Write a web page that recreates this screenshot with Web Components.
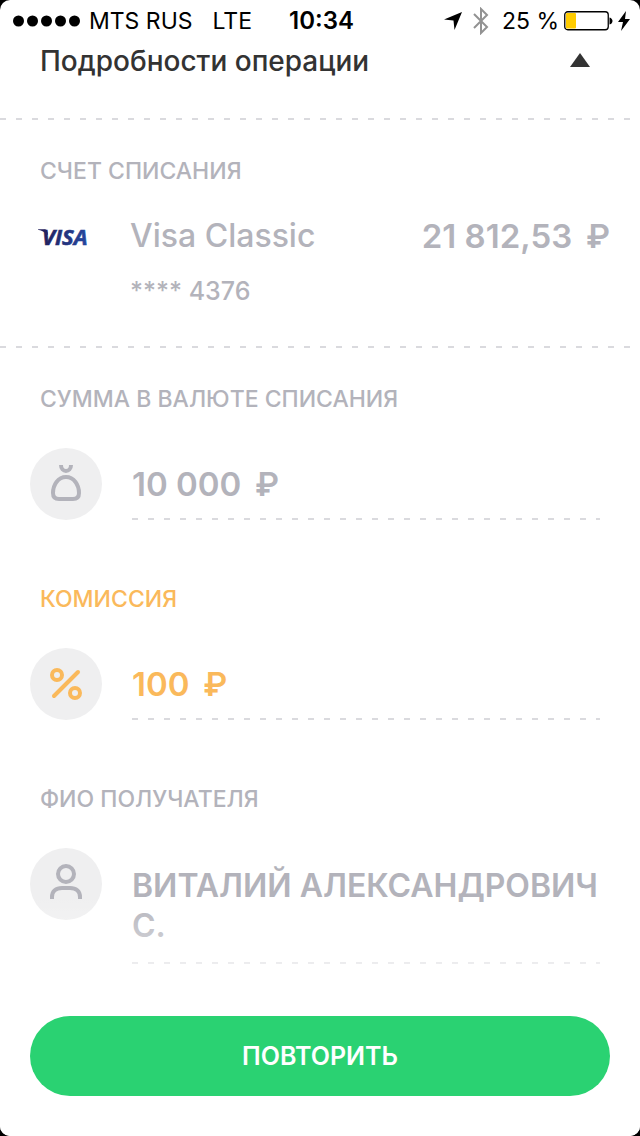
<!DOCTYPE html>
<html lang="ru">
<head>
<meta charset="utf-8">
<meta name="viewport" content="width=device-width, initial-scale=1">
<title>Подробности операции</title>
<style>
html { background: #000; }
body { margin: 0; font-family: Inter, "Liberation Sans", sans-serif; }
</style>
</head>
<body>
<operation-screen>
  <status-bar slot="status"></status-bar>
  <details-header slot="header">Подробности операции</details-header>
  <account-section amount="21 812,53&nbsp;&thinsp;₽" mask="**** 4376">
    <span slot="label">СЧЕТ СПИСАНИЯ</span>Visa Classic
  </account-section>
  <detail-field icon="bag" label="СУММА В ВАЛЮТЕ СПИСАНИЯ">10 000&nbsp;&thinsp;₽</detail-field>
  <detail-field icon="percent" label="КОМИССИЯ" accent>100&nbsp;&thinsp;₽</detail-field>
  <detail-field icon="person" label="ФИО ПОЛУЧАТЕЛЯ" multiline>ВИТАЛИЙ АЛЕКСАНДРОВИЧ С.</detail-field>
  <action-bar slot="footer">ПОВТОРИТЬ</action-bar>
</operation-screen>

<script>
const define = (name, html, setup) => {
  const template = document.createElement('template');
  template.innerHTML = html;
  customElements.define(name, class extends HTMLElement {
    constructor() {
      super();
      this.attachShadow({ mode: 'open' }).append(template.content.cloneNode(true));
    }
    connectedCallback() { if (setup) setup(this, this.shadowRoot); }
  });
};

const dashes = 'repeating-linear-gradient(90deg, #dadade 0 6px, transparent 6px 16px)';

define('operation-screen', `
<style>
:host {
  display: flex; flex-direction: column; min-height: 100vh; box-sizing: border-box;
  background: #fff; border-radius: 10px; overflow: hidden;
  --muted: #b3b3bb; --accent: #fab95b;
}
main { flex: 1; }
</style>
<slot name="status"></slot>
<slot name="header"></slot>
<main><slot></slot></main>
<slot name="footer"></slot>`);

define('status-bar', `
<style>
:host { display: grid; grid-template-columns: 1fr auto 1fr; align-items: center; box-sizing: border-box; height: 40px; padding: 2px 10px 0 13px; font-size: 23px; line-height: 28px; color: #000; white-space: nowrap; }
div { display: flex; align-items: center; }
.dots { margin-right: 8px; }
.net { margin-left: 20px; }
time { font-size: 24px; font-weight: 600; }
.right { justify-content: flex-end; }
.bt { margin: 0 13px 0 11px; }
.battery { margin: 0 5px 0 5px; }
svg { display: block; flex: none; }
</style>
<div>
  <svg class="dots" width="68" height="12"><g><circle cx="5.5" cy="6" r="5.5"/><circle cx="19.5" cy="6" r="5.5"/><circle cx="33.5" cy="6" r="5.5"/><circle cx="47.5" cy="6" r="5.5"/><circle cx="61.5" cy="6" r="5.5"/></g></svg>
  <span>MTS RUS</span><span class="net">LTE</span>
</div>
<time>10:34</time>
<div class="right">
  <svg width="18" height="18" viewBox="0 0 18 18"><path d="M18 0 10.5 18 9.500 8.500 0 7.500Z"/></svg>
  <svg class="bt" width="16" height="28" viewBox="0 0 16 28" fill="none" stroke="#929292" stroke-width="2"><path d="M1 7 14 20 8 26V2L14 8 1 21"/></svg>
  <span>25 %</span>
  <svg class="battery" width="49" height="20" viewBox="0 0 49 20"><rect x=".75" y=".75" width="43.500" height="18" rx="3" fill="none" stroke="#000" stroke-width="1.300"/><rect x="2" y="2" width="10" height="15.500" rx="1" fill="#fc0"/><path d="M45.500 6.500c4 1 4 6 0 7Z"/></svg>
  <svg width="12" height="20" viewBox="0 0 12 20"><path d="M8 0 0 11H5L3 20 12 8H7Z"/></svg>
</div>`);

define('details-header', `
<style>
:host { display: block; }
button {
  display: flex; justify-content: space-between; align-items: flex-start; box-sizing: border-box;
  width: 100%; height: 80px; margin: 0; padding: 4px 50px 0 40px; border: 0;
  background: ${dashes} 0 100% / 100% 2px no-repeat;
  font: 500 28px/34px Inter, "Liberation Sans", sans-serif; color: #333; text-align: left;
}
svg { margin-top: 9px; }
</style>
<button type="button" aria-expanded="true"><span><slot></slot></span>
<svg width="20" height="14" viewBox="0 0 20 14"><path d="M10 0 20 14H0Z" fill="#333"/></svg></button>`);

define('account-section', `
<style>
:host {
  display: block; padding: 37px 30px 39px 40px; color: var(--muted); font-weight: 500;
  background: ${dashes} 0 100% / 100% 2px no-repeat;
}
h2 { margin: 0 0 31px; font-size: 23px; line-height: 28px; font-weight: 500; }
.row { display: grid; grid-template-columns: 90px 1fr auto; align-items: center; font-size: 32px; line-height: 40px; }
.amount { font-size: 33px; font-weight: 600; }
svg { display: block; margin-left: -2px; }
.mask { margin: 19px 0 2px 90px; font-size: 25px; line-height: 32px; }
</style>
<h2><slot name="label"></slot></h2>
<div class="row">
  <svg width="60" height="40" viewBox="0 -11 60 40" role="img" aria-label="Visa">
    <defs><linearGradient id="g" x1="0" x2="1"><stop offset="0" stop-color="#221f5c"/><stop offset="1" stop-color="#25479f"/></linearGradient></defs>
    <path d="M0 2.300H7Q9 2.300 9.500 5L10 8Q6 4 0 2.800Z" fill="#221f5c"/>
    <text x="4" y="18" font-family="Open Sans, sans-serif" font-size="22" font-weight="700" font-style="italic" fill="url(#g)" stroke="url(#g)" stroke-width=".6">VISA</text>
  </svg>
  <span><slot></slot></span><span class="amount"></span>
</div>
<div class="mask"></div>`, (host, root) => {
  root.querySelector('.amount').textContent = host.getAttribute('amount');
  root.querySelector('.mask').textContent = host.getAttribute('mask');
});

const icons = {
  bag: '<path d="M31 17C31 25 41 25 41 17" stroke-width="4"/><path d="M36 29C44 29 49 37 49 45Q49 51 43 51H29Q23 51 23 45C23 37 28 29 36 29Z" stroke-width="4"/>',
  percent: '<g stroke-width="4"><circle cx="27" cy="27" r="5"/><circle cx="45" cy="45" r="5"/><path d="M24 48 48 24" stroke-linecap="round"/></g>',
  person: '<g stroke-width="4"><circle cx="36" cy="26" r="8"/><path d="M22 51V49C22 43 26 40 32 40H40C46 40 50 43 50 49V51"/></g>'
};

define('detail-field', `
<style>
:host { display: block; padding: 37px 40px 28px 30px; color: var(--muted); font-weight: 500; }
:host([accent]) { color: var(--accent); }
dl { margin: 0; }
dt { margin: 0 0 35px 10px; font-size: 23px; line-height: 28px; }
dd { display: grid; grid-template-columns: 72px 1fr; column-gap: 30px; margin: 0; }
svg { display: block; border-radius: 50%; background: #efeff0; fill: none; stroke: currentColor; }
.value {
  padding: 16px 0; font-size: 33px; line-height: 40px; font-weight: 600;
  background: ${dashes} 0 100% / 100% 2px no-repeat;
}
:host([multiline]) { padding-bottom: 12px; }
:host([multiline]) .value { padding: 18px 0; font-size: 32px; }
.text { margin-right: -10px; }
</style>
<dl><dt></dt><dd><svg width="72" height="72" viewBox="0 0 72 72" aria-hidden="true"></svg><div class="value"><div class="text"><slot></slot></div></div></dd></dl>`, (host, root) => {
  root.querySelector('dt').textContent = host.getAttribute('label');
  root.querySelector('svg').innerHTML = icons[host.getAttribute('icon')];
});

define('action-bar', `
<style>
:host { display: block; position: sticky; bottom: 0; padding: 40px 30px; background: #fff; }
:host::before {
  content: ""; position: absolute; left: 0; right: 0; bottom: 100%; height: 80px;
  background: linear-gradient(#fff0, #fff9); pointer-events: none;
}
button {
  display: block; width: 100%; height: 80px; border: 0; border-radius: 40px; background: #2ad272;
  color: #fff; font: 600 25px/32px Inter, "Liberation Sans", sans-serif;
}
</style>
<button type="button"><slot></slot></button>`);
</script>
</body>
</html>
